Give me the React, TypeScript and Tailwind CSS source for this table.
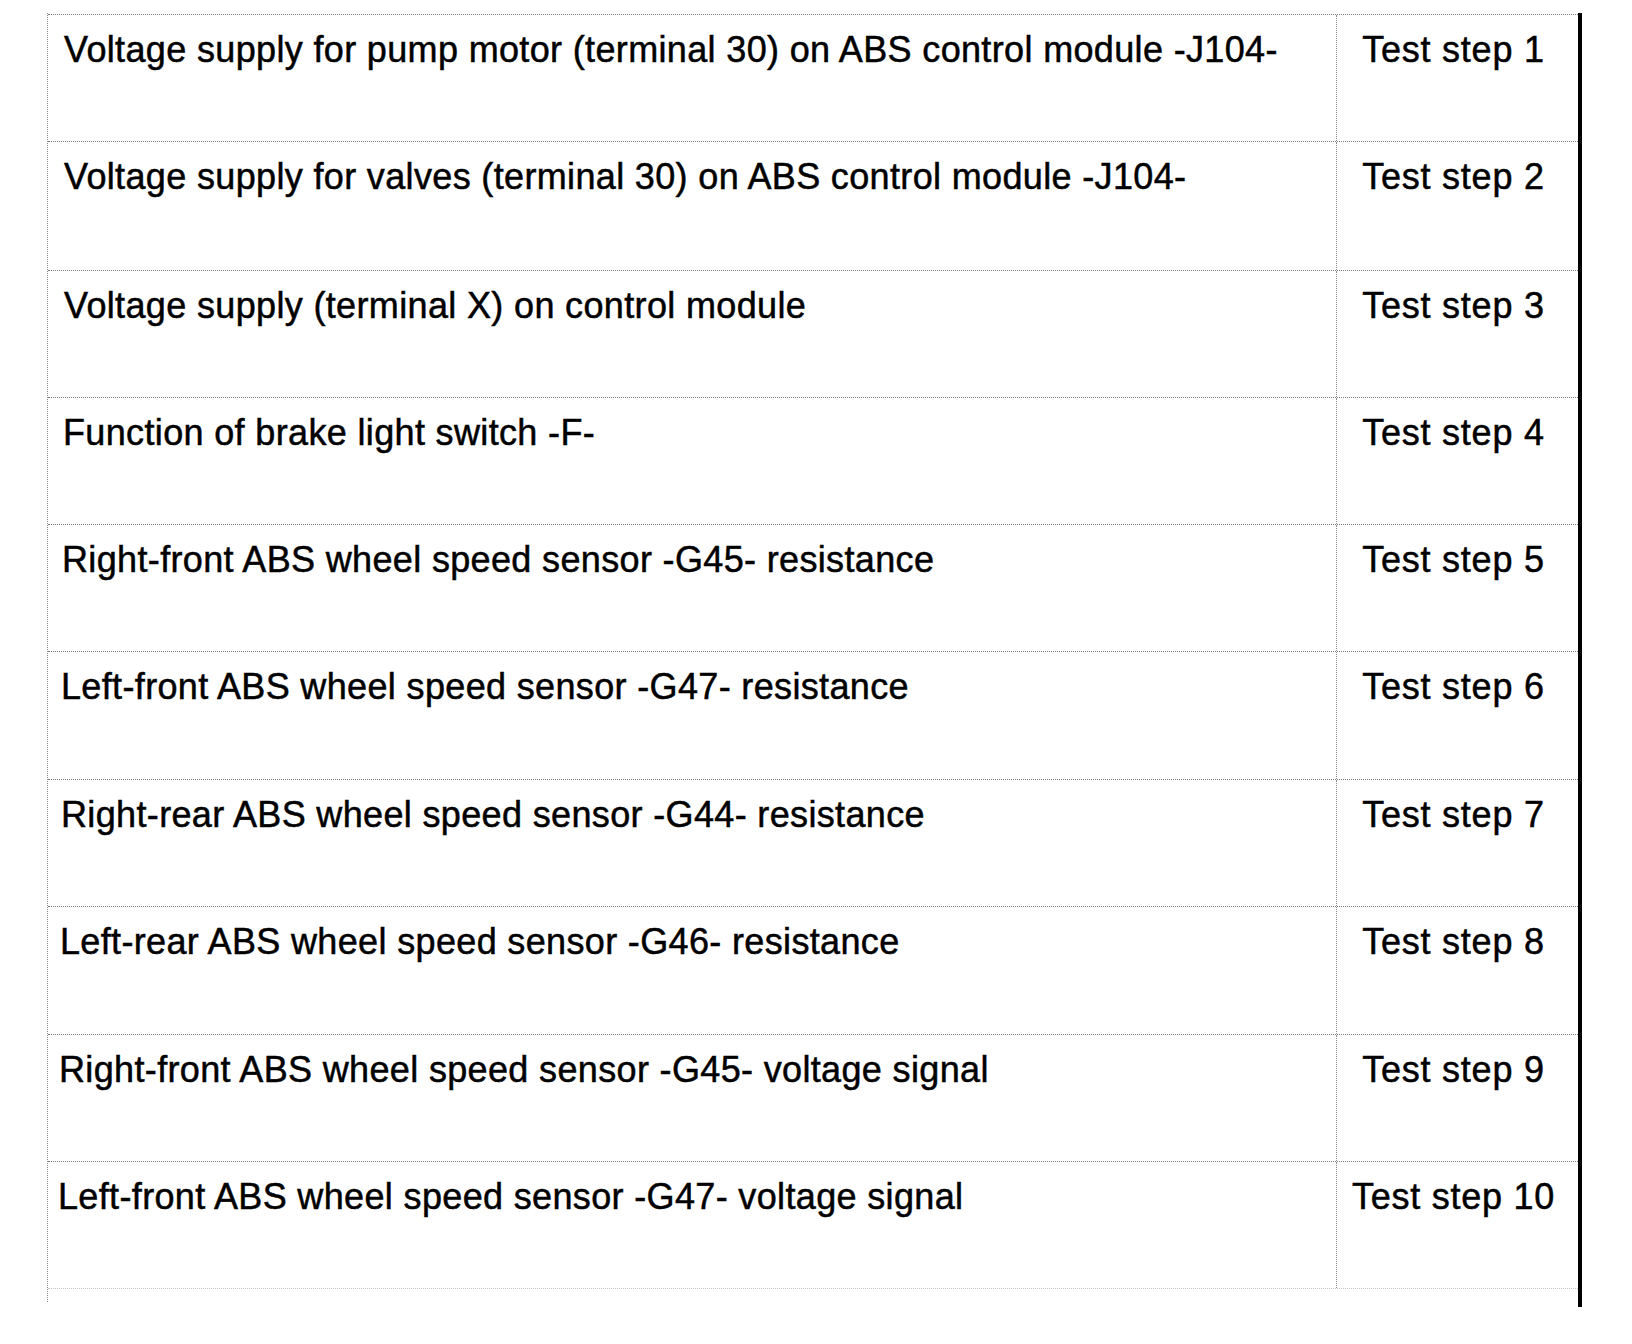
const rows = [
  { label: "Voltage supply for pump motor (terminal 30) on ABS control module -J104-", step: "Test step 1", h: "h-[127px]", pl: "pl-[16px]" },
  { label: "Voltage supply for valves (terminal 30) on ABS control module -J104-", step: "Test step 2", h: "h-[129px]", pl: "pl-[16px]" },
  { label: "Voltage supply (terminal X) on control module", step: "Test step 3", h: "h-[127px]", pl: "pl-[16px]" },
  { label: "Function of brake light switch -F-", step: "Test step 4", h: "h-[127px]", pl: "pl-[15px]" },
  { label: "Right-front ABS wheel speed sensor -G45- resistance", step: "Test step 5", h: "h-[127px]", pl: "pl-[14px]" },
  { label: "Left-front ABS wheel speed sensor -G47- resistance", step: "Test step 6", h: "h-[128px]", pl: "pl-[13px]" },
  { label: "Right-rear ABS wheel speed sensor -G44- resistance", step: "Test step 7", h: "h-[127px]", pl: "pl-[13px]" },
  { label: "Left-rear ABS wheel speed sensor -G46- resistance", step: "Test step 8", h: "h-[128px]", pl: "pl-[12px]" },
  { label: "Right-front ABS wheel speed sensor -G45- voltage signal", step: "Test step 9", h: "h-[127px]", pl: "pl-[11px]" },
  { label: "Left-front ABS wheel speed sensor -G47- voltage signal", step: "Test step 10", h: "h-[127px]", pl: "pl-[10px]" },
];

export default function App() {
  return (
    <div className="min-h-[1344px] w-[1632px] bg-white pt-[13px] pl-[47px] font-['Liberation_Sans',Arial,sans-serif] text-black [-webkit-text-stroke:0.5px_black]">
      <div className="flex items-start">
        {/* table body with dotted rules, left rule runs past the last row */}
        <div className="w-[1531px] border-l border-dotted border-[#8a8a8a] pb-[13px] pt-px">
          <div className="border-t border-dotted border-[#7a7a7a]">
            {rows.map((r, i) => (
              <div
                key={r.step}
                className={`flex ${r.h} border-b border-dotted ${
                  i === rows.length - 1 ? "border-[#c4c4c4]" : "border-[#7a7a7a]"
                }`}
              >
                <div
                  className={`w-[1289px] border-r border-dotted border-[#8a8a8a] ${r.pl} pt-[15px] text-[36px] leading-[40px] tracking-[0.35px]`}
                >
                  {r.label}
                </div>
                <div className="flex-1 pt-[15px] pr-[8px] text-center text-[36px] leading-[40px] tracking-[0.75px]">
                  {r.step}
                </div>
              </div>
            ))}
          </div>
        </div>
        {/* heavy right-hand rule */}
        <div className="h-[1294px] w-[4px] bg-black" />
      </div>
    </div>
  );
}
